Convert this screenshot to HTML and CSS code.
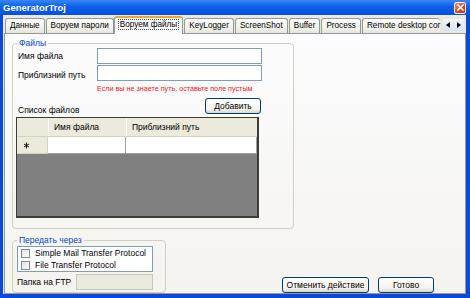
FILE: index.html
```html
<!DOCTYPE html>
<html>
<head>
<meta charset="utf-8">
<link rel="stylesheet" href="styles.css">
</head>
<body>
<div class="window">
  <div class="titlebar">
    <span class="title">GeneratorTroj</span>
    <span class="close"><svg width="7" height="7" viewBox="0 0 7 7"><path d="M1 1L6 6M6 1L1 6" stroke="#fff" stroke-width="1.6" stroke-linecap="square"/></svg></span>
  </div>
  <div class="client">
    <div class="tabstrip">
      <div class="tab">Данные</div>
      <div class="tab">Воруем пароли</div>
      <div class="tab selected"><span class="focus">Воруем файлы</span></div>
      <div class="tab">KeyLogger</div>
      <div class="tab">ScreenShot</div>
      <div class="tab">Buffer</div>
      <div class="tab">Process</div>
      <div class="tab last">Remote desktop cor</div>
      <div class="scroller">
        <span class="arrow"><svg width="4" height="6" viewBox="0 0 4 6"><path d="M4 0L0 3L4 6Z" fill="#000"/></svg></span>
        <span class="arrow"><svg width="4" height="6" viewBox="0 0 4 6"><path d="M0 0L4 3L0 6Z" fill="#000"/></svg></span>
      </div>
    </div>
    <div class="page">
      <fieldset class="group files">
        <legend>Файлы</legend>
        <div class="field-row">
          <span class="label">Имя файла</span>
          <span class="textbox"></span>
        </div>
        <div class="field-row second">
          <span class="label">Приблизний путь</span>
          <span class="textbox"></span>
        </div>
        <div class="hint">Если вы не знаете путь, оставьте поле пустым</div>
        <div class="list-head">
          <span class="label">Список файлов</span>
          <button class="btn btn-add">Добавить</button>
        </div>
        <div class="grid">
          <div class="grid-header">
            <div class="rh"></div>
            <div class="col c1">Имя файла</div>
            <div class="col c2">Приблизний путь</div>
          </div>
          <div class="grid-row">
            <div class="rh"><svg width="7" height="7" viewBox="0 0 7 7"><path d="M3.5 0.5V6.5M1 2L6 5M6 2L1 5" stroke="#000" stroke-width="0.9"/></svg></div>
            <div class="cell c1"></div>
            <div class="cell c2"></div>
          </div>
        </div>
      </fieldset>
      <div class="bottom">
        <fieldset class="group transfer">
          <legend>Передать через</legend>
          <div class="listbox">
            <div class="item"><span class="check"></span>Simple Mail Transfer Protocol</div>
            <div class="item"><span class="check"></span>File Transfer Protocol</div>
          </div>
          <div class="ftp-row">
            <span class="label">Папка на FTP</span>
            <span class="textbox disabled"></span>
          </div>
        </fieldset>
        <div class="actions">
          <button class="btn btn-cancel">Отменить действие</button>
          <button class="btn btn-ok">Готово</button>
        </div>
      </div>
    </div>
  </div>
</div>
</body>
</html>
```
FILE: styles.css
```css
* { box-sizing: border-box; }
body {
  margin: 0;
  font-family: "Liberation Sans", Arial, sans-serif;
  font-size: 8.5px;
  color: #000;
}
.window {
  width: 470px;
  height: 298px;
  display: flex;
  flex-direction: column;
  background: #0a4ad6;
}
.titlebar {
  height: 15px;
  flex: none;
  display: flex;
  align-items: center;
  justify-content: space-between;
  padding: 0 4px 0 3px;
  background: linear-gradient(#3a86f6, #0b5fe8 45%, #0552dc);
}
.title {
  color: #fff;
  font-weight: bold;
  font-size: 9.5px;
  line-height: 12px;
}
.close {
  width: 12px;
  height: 12px;
  border: 1px solid #f4f4f4;
  border-radius: 2px;
  background: linear-gradient(135deg, #f08c6c, #e0431e 60%, #c8361a);
  display: flex;
  align-items: center;
  justify-content: center;
}
.client {
  flex: 1;
  margin: 0 4px 5px 3px;
  background: #ece9d8;
  display: flex;
  flex-direction: column;
}
.tabstrip {
  height: 18px;
  flex: none;
  margin-top: 1px;
  padding-left: 2px;
  display: flex;
  align-items: flex-end;
  position: relative;
  z-index: 1;
  overflow: hidden;
  font-size: 8.2px;
}
.tab {
  flex: none;
  height: 15px;
  margin: 0 1px 1px 0;
  padding: 0 4px;
  border: 1px solid #919b9c;
  border-bottom: none;
  border-radius: 3px 3px 0 0;
  background: linear-gradient(#ffffff, #f3f2ed 60%, #e6e4da);
  line-height: 13px;
  white-space: nowrap;
}
.tab.selected {
  height: 18px;
  margin: 0 1px 0 -1px;
  padding: 0 3px;
  border-top: 2px solid #f7a42a;
  background: #fcfcfe;
  line-height: 14px;
}
.tab.last {
  padding-right: 0;
  border-right: none;
}
.focus {
  border: 1px dotted #555;
  padding: 0 1px;
}
.scroller {
  position: absolute;
  right: 2px;
  top: 3px;
  display: flex;
  gap: 1px;
}
.arrow {
  width: 10px;
  height: 12px;
  background: linear-gradient(#f4f7fe, #d6e0f8);
  display: flex;
  align-items: center;
  justify-content: center;
}
.page {
  flex: 1;
  margin: -1px 0 0 1px;
  border: 1px solid #919b9c;
  background: linear-gradient(#fcfcfe, #f4f3ee);
  padding: 4px 0 0 7px;
  display: flex;
  flex-direction: column;
}
.group {
  margin: 0;
  padding: 0;
  border: 1px solid #d0d0bf;
  border-radius: 4px;
  min-width: 0;
}
.group legend {
  margin-left: 4px;
  padding: 0 2px;
  line-height: 10px;
  color: #0046d5;
}
.files {
  width: 282px;
  height: 191px;
}
.label {
  white-space: nowrap;
}
.field-row {
  display: flex;
  align-items: center;
  height: 16px;
  margin-left: 5px;
}
.field-row.second {
  margin-top: 1px;
}
.field-row.second .label {
  padding-top: 4px;
}
.field-row .label {
  width: 79px;
}
.textbox {
  width: 165px;
  height: 16px;
  border: 1px solid #7f9db9;
  background: #fff;
}
.hint {
  margin: 2px 0 0 84px;
  font-size: 7.2px;
  line-height: 12px;
  color: #f0141e;
  white-space: nowrap;
}
.list-head {
  width: 243px;
  margin: 3px 0 0 5px;
  display: flex;
  justify-content: space-between;
  align-items: flex-end;
}
.list-head .label {
  line-height: 12px;
  margin-bottom: -2px;
}
.btn {
  height: 16px;
  padding: 0;
  border: 1px solid #003c74;
  border-radius: 3px;
  background: linear-gradient(#ffffff, #f5f4ef 70%, #dcd8cc);
  font-family: "Liberation Sans", Arial, sans-serif;
  font-size: 8.5px;
  color: #000;
  line-height: 13px;
  white-space: nowrap;
}
.btn-add { width: 56px; }
.btn-cancel { width: 87px; }
.btn-ok { width: 56px; }
.grid {
  width: 243px;
  height: 101px;
  margin: 3px 0 0 3px;
  border: 1px solid #3c3c3c;
  border-right-width: 2px;
  border-bottom-width: 2px;
  background: #808080;
}
.grid-header, .grid-row {
  display: flex;
}
.grid-header {
  height: 19px;
  background: #ebeadb;
  border-bottom: 1px solid #d6d2c2;
}
.grid-header .col {
  padding-left: 5px;
  line-height: 18px;
  border-left: 1px solid #fff;
  white-space: nowrap;
}
.rh {
  width: 31px;
  flex: none;
  background: #ebeadb;
}
.c1 { width: 78px; flex: none; }
.c2 { flex: 1; }
.grid-row {
  height: 17px;
  background: #fff;
}
.grid-row .rh {
  display: flex;
  align-items: center;
  padding-left: 6px;
  border-right: 1px solid #d6d2c2;
  border-bottom: 1px solid #d6d2c2;
}
.cell {
  border-right: 1px solid #a0a0a0;
  border-bottom: 1px solid #a0a0a0;
}
.bottom {
  margin-top: 6px;
  display: flex;
  align-items: flex-end;
}
.transfer {
  width: 154px;
  padding-bottom: 2px;
}
.listbox {
  width: 136px;
  height: 26px;
  margin: 1px 0 0 4px;
  border: 1px solid #7f9db9;
  background: #fff;
}
.item {
  height: 12px;
  display: flex;
  align-items: center;
  white-space: nowrap;
}
.check {
  width: 9px;
  height: 9px;
  margin: 0 5px 0 3px;
  border: 1px solid #7a8ca3;
  background: linear-gradient(135deg, #e4e4de, #fbfbf9);
}
.ftp-row {
  display: flex;
  align-items: center;
  height: 16px;
  margin: 2px 0 0 4px;
}
.ftp-row .label {
  width: 59px;
}
.textbox.disabled {
  width: 77px;
  border-color: #c9c7ba;
  background: #ebeadf;
}
.actions {
  margin: 0 31px 0 auto;
  display: flex;
  gap: 9px;
}
```
